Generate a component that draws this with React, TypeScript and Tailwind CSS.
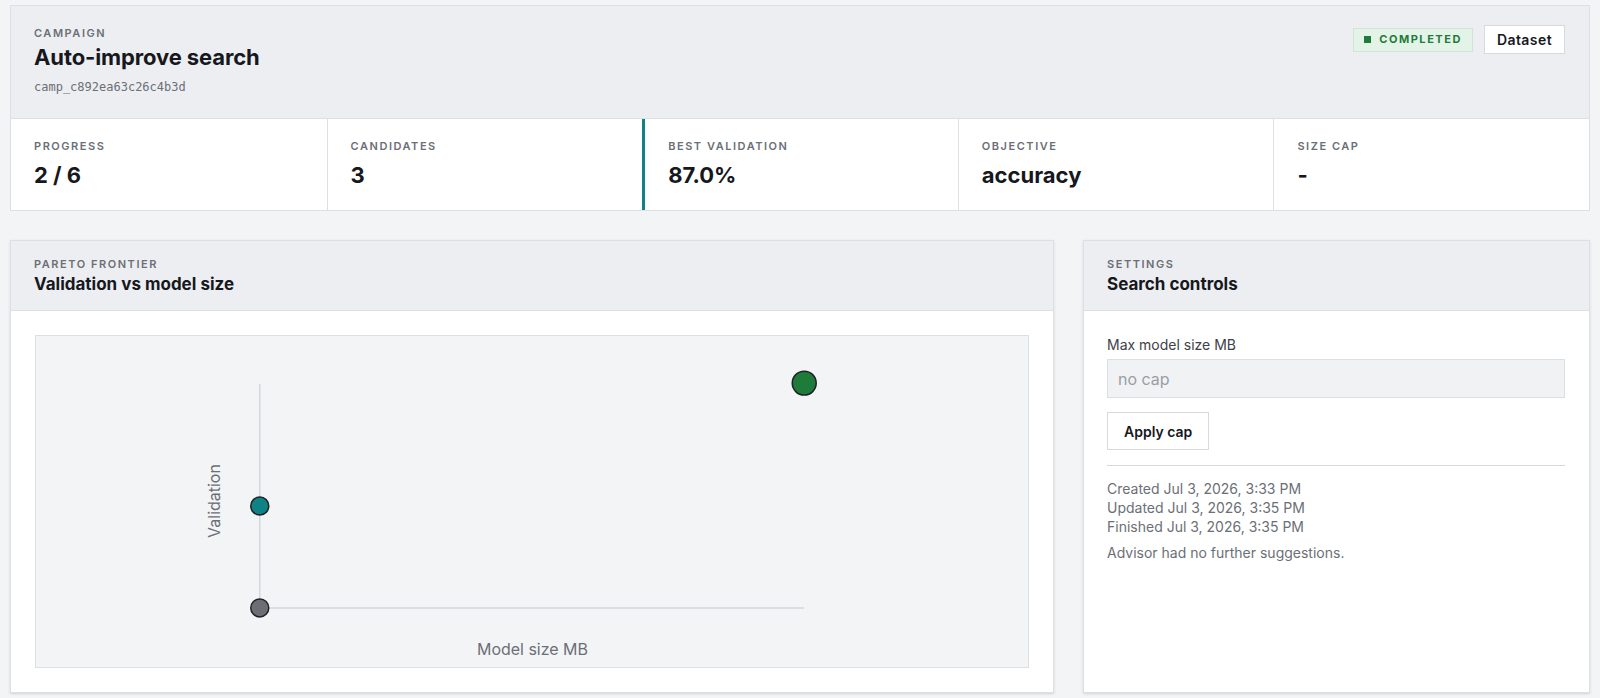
import React from 'react';

const stats = [
  { label: 'Progress', value: '2 / 6' },
  { label: 'Candidates', value: '3' },
  { label: 'Best validation', value: '87.0%', accent: true },
  { label: 'Objective', value: 'accuracy' },
  { label: 'Size cap', value: '-' },
];

function Eyebrow({ children }: { children: React.ReactNode }) {
  return (
    <div className="text-[11px] leading-4 font-semibold uppercase tracking-[0.14em] text-[#6b6f76]">
      {children}
    </div>
  );
}

function ParetoChart() {
  // points: [x, y, r, fill]
  const points: [number, number, number, string][] = [
    [224, 272, 9, '#6b6e73'],
    [224, 170, 9, '#0f8285'],
    [769, 47, 12, '#1e7b3a'],
  ];
  return (
    <svg viewBox="0 0 993 331" className="block h-[331px] w-full">
      <line x1="224" y1="48" x2="224" y2="272" stroke="#d4d7dc" strokeWidth="1.5" />
      <line x1="224" y1="272" x2="769" y2="272" stroke="#d4d7dc" strokeWidth="1.5" />
      {points.map(([x, y, r, fill], i) => (
        <circle key={i} cx={x} cy={y} r={r} fill={fill} stroke="#1f2329" strokeWidth="1.5" />
      ))}
      <text
        x="0"
        y="0"
        transform="translate(184 165) rotate(-90)"
        textAnchor="middle"
        fontSize="16"
        fill="#6b6f76"
        fontFamily="Inter, sans-serif"
      >
        Validation
      </text>
      <text x="497" y="319" textAnchor="middle" fontSize="16" fill="#6b6f76" fontFamily="Inter, sans-serif">
        Model size MB
      </text>
    </svg>
  );
}

export default function App() {
  return (
    <div className="min-h-screen bg-[#f3f4f6] px-[10px] pt-[5px] pb-4 font-['Inter',sans-serif] text-[#16181d]">
      {/* Campaign header */}
      <div className="border border-[#dcdfe3] bg-white">
        <div className="flex items-start justify-between bg-[#edeef1] pl-[23px] pr-6 pt-[19px] pb-[23px]">
          <div>
            <Eyebrow>Campaign</Eyebrow>
            <h1 className="mt-0.5 text-[22px] leading-7 font-bold tracking-[-0.005em]">Auto-improve search</h1>
            <div className="mt-2 font-['DejaVu_Sans_Mono',monospace] text-[12px] leading-4 text-[#6b6f76]">
              camp_c892ea63c26c4b3d
            </div>
          </div>
          <div className="flex items-center gap-[11px]">
            <span className="flex h-6 items-center gap-2 border border-[#cfe6d6] bg-[#e4f3e8] px-[10px] text-[11px] font-bold uppercase tracking-[0.14em] text-[#1e7b3a]">
              <span className="h-[7px] w-[7px] bg-[#1e7b3a]" />
              Completed
            </span>
            <button className="h-[29px] border border-[#d6d9de] bg-white px-3 text-[14px] font-semibold tracking-[0.03em]">
              Dataset
            </button>
          </div>
        </div>
        <div className="grid grid-cols-5 border-t border-[#dcdfe3]">
          {stats.map((s, i) => (
            <div
              key={s.label}
              className={`pl-[23px] pt-[19px] pb-[21px] ${i > 0 ? 'border-l border-[#dcdfe3]' : ''} ${
                s.accent ? 'border-l-[3px] border-l-[#0f8285] pl-[22px]' : ''
              }`}
            >
              <Eyebrow>{s.label}</Eyebrow>
              <div className="mt-[7px] text-[22px] leading-7 font-bold">{s.value}</div>
            </div>
          ))}
        </div>
      </div>

      {/* Lower panels */}
      <div className="mt-[29px] grid grid-cols-[minmax(0,1fr)_507px] gap-[29px]">
        <section className="border border-[#dcdfe3] bg-white shadow-sm">
          <div className="border-b border-[#dcdfe3] bg-[#edeef1] pl-[23px] pt-[15px] pb-[14px]">
            <Eyebrow>Pareto frontier</Eyebrow>
            <h2 className="text-[17px] leading-6 font-bold">Validation vs model size</h2>
          </div>
          <div className="p-6">
            <div className="border border-[#dcdfe3] bg-[#f3f4f6]">
              <ParetoChart />
            </div>
          </div>
        </section>

        <section className="border border-[#dcdfe3] bg-white shadow-sm">
          <div className="border-b border-[#dcdfe3] bg-[#edeef1] pl-[23px] pt-[15px] pb-[14px]">
            <Eyebrow>Settings</Eyebrow>
            <h2 className="text-[17px] leading-6 font-bold">Search controls</h2>
          </div>
          <div className="pl-[23px] pr-6 pt-6">
            <label className="block text-[14px] leading-5 text-[#3d4148]">Max model size MB</label>
            <input
              placeholder="no cap"
              className="mt-1 block h-[39px] w-full border border-[#dcdfe3] bg-[#f1f2f4] px-[10px] text-[16px] placeholder:text-[#9a9ea5] outline-none"
            />
            <button className="mt-3.5 h-[38px] border border-[#d6d9de] bg-white px-4 text-[14px] font-semibold">
              Apply cap
            </button>
            <div className="mt-[15px] border-t border-[#d6d9de]" />
            <div className="mt-[13px] text-[14px] leading-[19px] text-[#6b6f76]">
              <div>Created Jul 3, 2026, 3:33 PM</div>
              <div>Updated Jul 3, 2026, 3:35 PM</div>
              <div>Finished Jul 3, 2026, 3:35 PM</div>
            </div>
            <p className="mt-[7px] text-[14px] leading-[19px] text-[#6b6f76]">Advisor had no further suggestions.</p>
          </div>
        </section>
      </div>
    </div>
  );
}
